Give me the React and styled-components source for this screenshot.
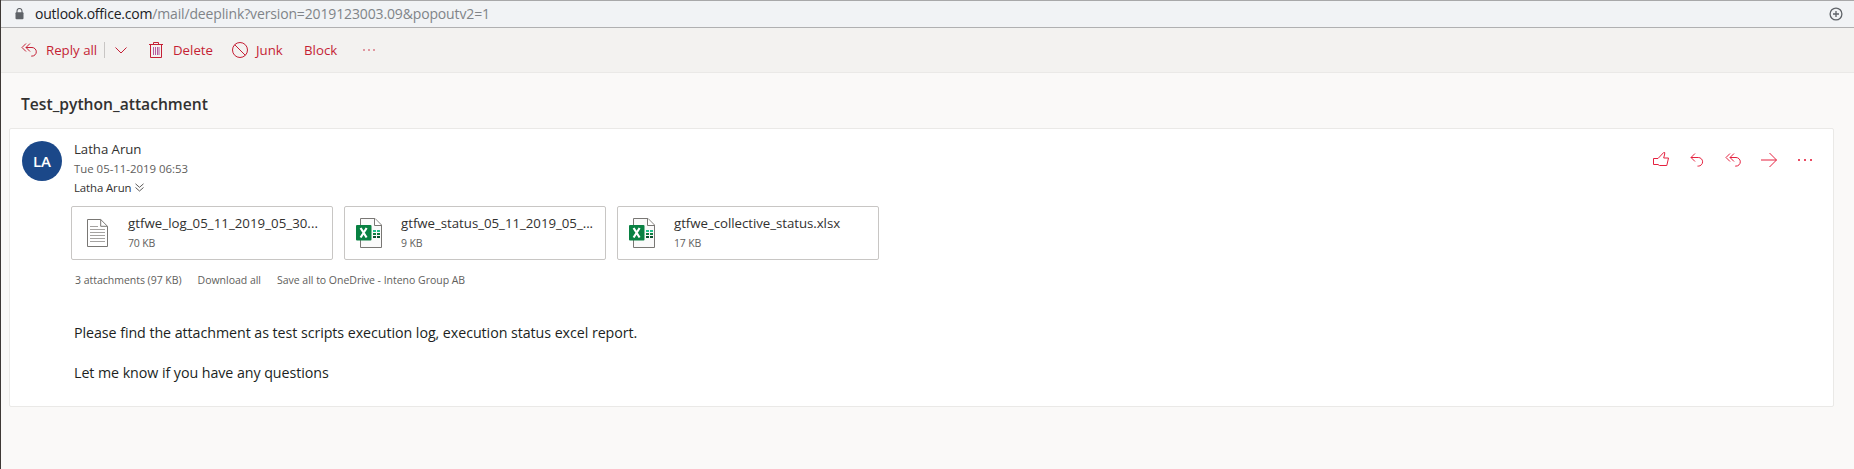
import React from 'react';
import styled, { createGlobalStyle } from 'styled-components';

const Global = createGlobalStyle`
  * { box-sizing: border-box; }
  body { margin: 0; background: #faf9f8; font-family: "Open Sans", "Noto Sans", sans-serif; color: #323130; }
  svg { display: block; flex: none; }
`;

const Page = styled.div`
  height: 469px;
  border-left: 1px solid #3e3936;
  background: #faf9f8;
`;

const AddressBar = styled.header`
  display: flex;
  align-items: center;
  height: 28px;
  padding: 0 11px 0 14px;
  border-top: 1px solid #a8a8a9;
  border-bottom: 1px solid #b0b0b1;
  background: #f1f3f5;
`;

const Url = styled.div`
  flex: 1;
  margin-left: 11px;
  font-size: 14px;
  line-height: 20px;
  letter-spacing: -0.14px;
  color: #808488;
`;

const Host = styled.span`
  letter-spacing: -0.22px;
  color: #202124;
`;

const Toolbar = styled.nav`
  display: flex;
  align-items: center;
  height: 45px;
  padding: 0 0 0 20px;
  border-bottom: 1px solid #eae9e7;
  background: #f3f2f0;
  color: #c51f35;
  font-size: 13.25px;
  line-height: 20px;
`;

const Command = styled.div`
  display: flex;
  align-items: center;
  gap: ${(p) => p.$gap || 8}px;
  width: ${(p) => p.$width}px;
`;

const Divider = styled.i`
  width: 1px;
  height: 16px;
  margin-right: 10px;
  background: #c8c6c4;
`;

const Subject = styled.h1`
  margin: 0;
  height: 55px;
  padding: 19px 0 0 20px;
  font-size: 15.65px;
  line-height: 24px;
  font-weight: 600;
`;

const Message = styled.article`
  display: flex;
  align-items: flex-start;
  width: 1825px;
  height: 279px;
  margin-left: 8px;
  padding: 12px 20px 0 12px;
  border: 1px solid #eae9e7;
  border-radius: 2px;
  background: #fff;
`;

const Avatar = styled.div`
  width: 40px;
  height: 40px;
  border-radius: 50%;
  background: #1b4889;
  color: #fff;
  font-size: 15px;
  font-weight: 600;
  line-height: 41px;
  text-align: center;
`;

const Content = styled.div`
  flex: 1;
  margin-left: 12px;
`;

const Sender = styled.div`
  height: 18px;
  line-height: 18px;
  font-size: 13.25px;
  letter-spacing: -0.06px;
  margin-top: -1px;
`;

const Sent = styled.div`
  margin-top: 2px;
  font-size: 11.4px;
  line-height: 17px;
  color: #605e5c;
`;

const Recipient = styled.div`
  display: flex;
  align-items: center;
  gap: 4px;
  margin-top: 2px;
  font-size: 11.4px;
  line-height: 17px;
  letter-spacing: -0.1px;
`;

const Files = styled.div`
  display: flex;
  gap: 11px;
  margin: 10px 0 0 -3px;
`;

const File = styled.div`
  display: flex;
  width: 262px;
  height: 54px;
  padding: 6px 0 0 11px;
  border: 1px solid #c8c6c4;
  border-radius: 2px;
`;

const FileText = styled.div`
  margin-left: 13px;
`;

const FileName = styled.div`
  font-size: 13.25px;
  line-height: 20px;
  letter-spacing: ${(p) => p.$tracking || 0}px;
`;

const FileSize = styled.div`
  font-size: 10.5px;
  line-height: 20px;
  letter-spacing: -0.15px;
  color: #605e5c;
`;

const FileLinks = styled.div`
  display: flex;
  gap: 16px;
  margin: 12px 0 0 1px;
  font-size: 10.5px;
  line-height: 16px;
  letter-spacing: -0.02px;
  color: #605e5c;
`;

const Body = styled.div`
  margin-top: 35px;
  font-size: 14.25px;
  line-height: 20px;
  letter-spacing: -0.06px;
  color: #201f1e;
`;

const Paragraph = styled.p`
  margin: 0 0 20px;
`;

const Actions = styled.div`
  display: flex;
  margin-top: 11px;
  gap: 20px;
  color: #e5213f;
`;

const Line = ({ w = 16, h = 16, s = 1, children }) => (
  <svg width={w} height={h} viewBox={`0 0 ${w} ${h}`} fill="none" stroke="currentColor" strokeWidth={s}>
    {children}
  </svg>
);

const ReplyAllIcon = () => (
  <Line>
    <path d="M5 1.5 1 5.5l4 4M9 1.5l-4 4 4 4M5 5.5h6a4.3 4.3 0 0 1 0 8.6h-.8" />
  </Line>
);

const ReplyIcon = () => (
  <Line>
    <path d="M6 1.5 2 5.5l4 4M2 5.5h7.3a4.3 4.3 0 0 1 0 8.6H8.5" />
  </Line>
);

const Dots = ({ size = 1.5, step = 5 }) => (
  <svg width="16" height="16" fill="currentColor">
    {[0, 1, 2].map((i) => (
      <rect key={i} x={8 + (i - 1) * step - size / 2} y={8 - size / 2} width={size} height={size} />
    ))}
  </svg>
);

const TextFileIcon = () => (
  <svg width="32" height="40" viewBox="0 0 32 40" fill="none" stroke="#797774">
    <path d="M4.5 6.5h13.2l6.8 6.8v20.2h-20zM17.7 6.5v6.8h6.8" fill="#fff" />
    <path d="M7 13.5h8M7 16.5h15M7 19.5h15M7 22.5h15M7 25.5h15M7 28.5h15" stroke="#a5a3a1" />
  </svg>
);

const ExcelIcon = () => (
  <svg width="32" height="40" viewBox="0 0 32 40">
    <path d="M4.5 5.5h14.500l6.500 6.500v22.500h-21z" fill="#fafafa" stroke="#797774" />
    <path d="M18.500 5.500v7H25" fill="#fff" stroke="#797774" />
    <path d="M17 17h3v2h-3zM21 17h3v2h-3z" fill="#21c08b" />
    <path d="M17 20h3v2h-3zM21 20h3v2h-3z" fill="#107c41" />
    <path d="M17 23h3v2h-3zM21 23h3v2h-3z" fill="#0b5230" />
    <rect y="12" width="15.500" height="15.500" rx="1" fill="#088142" />
    <path d="m4.600 15 6 9.500M10.600 15l-6 9.500" stroke="#fff" strokeWidth="2.200" />
  </svg>
);

const files = [
  { name: 'gtfwe_log_05_11_2019_05_30...', size: '70 KB', Icon: TextFileIcon, tracking: 0.04 },
  { name: 'gtfwe_status_05_11_2019_05_...', size: '9 KB', Icon: ExcelIcon, tracking: -0.02 },
  { name: 'gtfwe_collective_status.xlsx', size: '17 KB', Icon: ExcelIcon, tracking: -0.04 },
];

export default function App() {
  return (
    <Page>
      <Global />
      <AddressBar>
        <svg width="9" height="12" viewBox="0 0 9 12">
          <path d="M2 5V3a2.5 2.5 0 0 1 5 0v2" fill="none" stroke="#5f6368" strokeWidth="1.1" />
          <rect x=".5" y="4.3" width="8" height="7" rx="1" fill="#5f6368" />
        </svg>
        <Url><Host>outlook.office.com</Host>/mail/deeplink?version=2019123003.09&amp;popoutv2=1</Url>
        <Line w={14} h={14} s={1.3}>
          <g stroke="#5f6368"><circle cx="7" cy="7" r="5.9" /><path d="M7 4v6M4 7h6" /></g>
        </Line>
      </AddressBar>
      <Toolbar>
        <Command $width={83} $gap={9}><ReplyAllIcon />Reply all</Command>
        <Divider />
        <Command $width={33}><Line w={12}><path d="m.5 5.5 5.5 5.5L11.5 5.5" /></Line></Command>
        <Command $width={84} $gap={9}>
          <Line>
            <path d="M1 2.5h14M5.5 2.5v-2h5v2M2.5 2.5v13h11v-13" />
            <path d="M5.5 5v8M7.5 5v8M9.5 5v8M11 5v8" stroke="#b65a9e" />
          </Line>
          Delete
        </Command>
        <Command $width={72}>
          <Line><circle cx="8" cy="8" r="7.5" /><path d="m2.7 2.7 10.6 10.6" /></Line>
          Junk
        </Command>
        <Command $width={57}>Block</Command>
        <Dots size={1.3} />
      </Toolbar>
      <Subject>Test_python_attachment</Subject>
      <Message>
        <Avatar>LA</Avatar>
        <Content>
          <Sender>Latha Arun</Sender>
          <Sent>Tue 05-11-2019 06:53</Sent>
          <Recipient>
            Latha Arun
            <Line w={9} h={9} s={0.8}><path d="M.5.8 4.5 4.3 8.5.8M.5 4.5l4 3.500 4-3.500" /></Line>
          </Recipient>
          <Files>
            {files.map(({ name, size, Icon, tracking }) => (
              <File key={name}>
                <Icon />
                <FileText>
                  <FileName $tracking={tracking}>{name}</FileName>
                  <FileSize>{size}</FileSize>
                </FileText>
              </File>
            ))}
          </Files>
          <FileLinks>
            <span>3 attachments (97 KB)</span>
            <span>Download all</span>
            <span>Save all to OneDrive - Inteno Group AB</span>
          </FileLinks>
          <Body>
            <Paragraph>Please find the attachment as test scripts execution log, execution status excel report.</Paragraph>
            <Paragraph>Let me know if you have any questions</Paragraph>
          </Body>
        </Content>
        <Actions>
          <Line><path d="M.5 6.5h4.500l5.700-6h1v1.500l-1 4h4.800L13.800 13.500H6.500l-1.500-1H.5z" /></Line>
          <ReplyIcon />
          <ReplyAllIcon />
          <Line><path d="M0 8h15.500M8.500 1l7 7-7 7" /></Line>
          <Dots size={1.8} step={6} />
        </Actions>
      </Message>
    </Page>
  );
}
